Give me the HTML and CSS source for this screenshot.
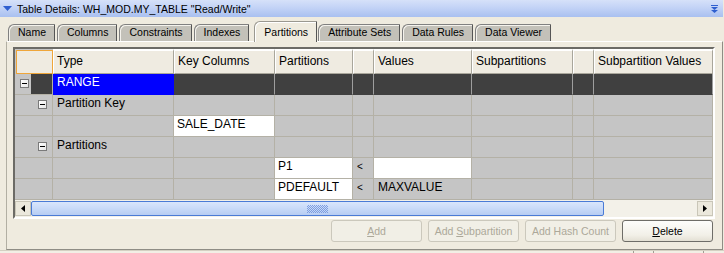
FILE: index.html
```html
<!DOCTYPE html>
<html>
<head>
<meta charset="utf-8">
<link rel="stylesheet" href="styles.css">
</head>
<body>
<div class="app">
  <div class="titlebar">
    <svg class="title-tri" width="9" height="6" viewBox="0 0 9 6"><path d="M0 0H9L4.5 5Z" fill="#2f5fd0"/></svg>
    <span class="title">Table Details: WH_MOD.MY_TABLE "Read/Write"</span>
    <svg class="title-collapse" width="7" height="8" viewBox="0 0 7 8"><path d="M0 0.5H7" stroke="#2f5fd0" stroke-width="1"/><path d="M0 2H7L3.5 5Z" fill="#2f5fd0"/><path d="M0 5H7L3.5 8Z" fill="#2f5fd0"/></svg>
  </div>
  <div class="tabs">
    <div class="tab">Name</div>
    <div class="tab">Columns</div>
    <div class="tab">Constraints</div>
    <div class="tab">Indexes</div>
    <div class="tab active">Partitions</div>
    <div class="tab">Attribute Sets</div>
    <div class="tab">Data Rules</div>
    <div class="tab">Data Viewer</div>
  </div>
  <div class="panel">
    <div class="scrollpane">
      <div class="grid">
        <div class="hcell corner"></div>
        <div class="hcell">Type</div>
        <div class="hcell">Key Columns</div>
        <div class="hcell">Partitions</div>
        <div class="hcell"></div>
        <div class="hcell">Values</div>
        <div class="hcell">Subpartitions</div>
        <div class="hcell"></div>
        <div class="hcell">Subpartition Values</div>

        <div class="cell tree sel-tree lvl0"><span class="toggle"></span></div>
        <div class="cell sel-blue">RANGE</div>
        <div class="cell sel"></div>
        <div class="cell sel"></div>
        <div class="cell sel"></div>
        <div class="cell sel"></div>
        <div class="cell sel"></div>
        <div class="cell sel"></div>
        <div class="cell sel"></div>

        <div class="cell tree lvl1"><span class="toggle"></span></div>
        <div class="cell">Partition Key</div>
        <div class="cell"></div>
        <div class="cell"></div>
        <div class="cell"></div>
        <div class="cell"></div>
        <div class="cell"></div>
        <div class="cell"></div>
        <div class="cell"></div>

        <div class="cell tree"></div>
        <div class="cell"></div>
        <div class="cell edit">SALE_DATE</div>
        <div class="cell"></div>
        <div class="cell"></div>
        <div class="cell"></div>
        <div class="cell"></div>
        <div class="cell"></div>
        <div class="cell"></div>

        <div class="cell tree lvl1"><span class="toggle"></span></div>
        <div class="cell">Partitions</div>
        <div class="cell"></div>
        <div class="cell"></div>
        <div class="cell"></div>
        <div class="cell"></div>
        <div class="cell"></div>
        <div class="cell"></div>
        <div class="cell"></div>

        <div class="cell tree"></div>
        <div class="cell"></div>
        <div class="cell"></div>
        <div class="cell edit">P1</div>
        <div class="cell op">&lt;</div>
        <div class="cell edit"></div>
        <div class="cell"></div>
        <div class="cell"></div>
        <div class="cell"></div>

        <div class="cell tree"></div>
        <div class="cell"></div>
        <div class="cell"></div>
        <div class="cell edit">PDEFAULT</div>
        <div class="cell op">&lt;</div>
        <div class="cell">MAXVALUE</div>
        <div class="cell"></div>
        <div class="cell"></div>
        <div class="cell"></div>
      </div>
      <div class="hscroll">
        <div class="arrow left"><svg width="4" height="7" viewBox="0 0 4 7"><path d="M4 0V7L0 3.5Z" fill="#000"/></svg></div>
        <div class="thumb"><span class="grip"></span></div>
        <div class="track"></div>
        <div class="arrow right"><svg width="4" height="7" viewBox="0 0 4 7"><path d="M0 0V7L4 3.5Z" fill="#000"/></svg></div>
      </div>
    </div>
    <div class="buttons">
      <button class="btn" disabled><u>A</u>dd</button>
      <button class="btn" disabled>Add <u>S</u>ubpartition</button>
      <button class="btn" disabled>Add Hash Count</button>
      <button class="btn primary"><u>D</u>elete</button>
    </div>
  </div>
  <div class="statusbar">
    <span class="sep s1"></span><span class="sep s2"></span><span class="sep s3"></span>
  </div>
</div>
</body>
</html>
```
FILE: styles.css
```css
* { box-sizing: border-box; }
html, body { margin: 0; padding: 0; }
body {
  background: #efebdf;
  font-family: "Liberation Sans", Arial, sans-serif;
  width: 724px;
  height: 253px;
  overflow: hidden;
  color: #000;
}
.app { width: 724px; height: 253px; display: flex; flex-direction: column; }

.titlebar {
  height: 17px;
  margin-right: 1px;
  display: flex;
  align-items: center;
  background: linear-gradient(#d6e1f9, #c3d3f6 45%, #a9c0f0);
  font-size: 10.5px;
}
.title-tri { margin: 1px 5px 0 3px; }
.title { flex: 1; }
.title-collapse { margin: 0 5px 0 0; }

.tabs {
  height: 24px;
  display: flex;
  align-items: flex-end;
  padding-left: 8px;
  gap: 2px;
  position: relative;
  z-index: 2;
}
.tab {
  height: 17px;
  padding: 0 8px 0 9px;
  font-size: 10.5px;
  line-height: 15px;
  background: #c3c1b9;
  border: 1px solid #808080;
  border-bottom: none;
  border-right-color: #555;
  border-top-left-radius: 6px;
  box-shadow: inset 1px 1px 0 #f4f2ec;
  white-space: nowrap;
}
.tab.active {
  padding: 3px 8px 0 9px;
  margin: 0 -1px -1px 3px;
  height: 21px;
  background: #efebdf;
  border-color: #9a9890;
  border-right-color: #555;
  box-shadow: inset 1px 1px 0 #fff;
}

.panel {
  margin-left: 6px;
  margin-right: 1px;
  height: 209px;
  border-top: 1px solid #fff;
  border-left: 1px solid #b2afa3;
  border-right: 1px solid #8f8d85;
  border-bottom: 1px solid #8f8d85;
  padding: 5px 7px 0 6px;
  display: flex;
  flex-direction: column;
}

.scrollpane {
  width: 702px;
  border-style: solid;
  border-width: 2px;
  border-color: #6c6b66 #fff #fff #6c6b66;
  display: flex;
  flex-direction: column;
}
.grid {
  display: grid;
  grid-template-columns: 38px 121px 101px 78px 21px 98px 101px 21px 119px;
  grid-template-rows: 25px repeat(6, 21px);
  background: #c5c5c5;
  font-size: 12px;
}
.hcell {
  background: #efebe1;
  border-top: 2px solid #fff;
  border-left: 1px solid #fff;
  border-right: 1px solid #a9a69b;
  border-bottom: 1px solid #a9a69b;
  padding: 2px 0 0 3px;
  line-height: 17px;
  white-space: nowrap;
  overflow: hidden;
}
.hcell.corner {
  border: 1px solid #efa63a;
  margin: 1px 0 0 1px;
}
.cell {
  border-right: 1px solid #b4b1a6;
  border-bottom: 1px solid #b4b1a6;
  padding: 0 0 0 4px;
  line-height: 17px;
  white-space: nowrap;
  overflow: hidden;
}
.cell.tree { display: flex; align-items: center; padding: 0 0 1px 0; }
.cell.tree.lvl0 { padding-left: 5px; }
.cell.tree.lvl1 { padding-left: 23px; }
.cell.sel-tree { background: linear-gradient(to right, #c5c5c5 16px, #404040 16px); }
.cell.sel { background: #404040; border-right-color: #9e9e9e; border-bottom-color: #404040; }
.cell.sel-blue { background: #0000ff; color: #fff; border-right-color: #0000ff; border-bottom-color: #0000ff; }
.cell.edit { background: #fff; padding-left: 3px; }
.cell.op { padding-left: 4px; font-size: 10px; }

.toggle {
  width: 9px;
  height: 9px;
  border: 1px solid #7a7a7a;
  background: linear-gradient(135deg, #fff, #e6e6e6);
  position: relative;
  display: block;
}
.toggle::after {
  content: "";
  position: absolute;
  left: 1px;
  top: 3px;
  width: 5px;
  height: 1px;
  background: #000;
}

.hscroll {
  height: 17px;
  display: flex;
  background: #f3f1e9;
  padding-top: 1px;
}
.arrow {
  width: 16px;
  height: 15px;
  background: #ebe8dc;
  border: 1px solid #c9c6b8;
  display: flex;
  align-items: center;
  justify-content: center;
}
.thumb {
  width: 573px;
  height: 15px;
  border: 1px solid #4a7bd6;
  border-radius: 2px;
  background: linear-gradient(#d9e6fc, #c8daf8 50%, #b7cdf3);
  display: flex;
  align-items: center;
  justify-content: center;
}
.grip {
  display: block;
  width: 21px;
  height: 8px;
  background-image: conic-gradient(#7d9de0 25%, transparent 0 50%, #7d9de0 0 75%, transparent 0);
  background-size: 2px 2px;
}
.track { flex: 1; }

.buttons {
  display: flex;
  justify-content: flex-end;
  gap: 6px;
  margin-top: 1px;
  margin-right: 2px;
}
.btn {
  width: 91px;
  height: 22px;
  padding: 0;
  font-family: "Liberation Sans", Arial, sans-serif;
  font-size: 10.5px;
  border-radius: 3px;
  background: #f1efe6;
  border: 1px solid #cbc8bc;
  color: #aca899;
  white-space: nowrap;
}
.btn.primary {
  color: #000;
  border-color: #6e6d68;
  background: linear-gradient(#fdfdfb, #f2f0e8 70%, #e3e0d4);
}

.statusbar {
  flex: 1;
  position: relative;
  border-top: 1px solid #d4d0c2;
  background: #f2efe5;
}
.sep { position: absolute; top: 0; width: 1px; height: 3px; background: #a09d92; }
.s1 { left: 633px; }
.s2 { left: 653px; }
.s3 { left: 703px; }
```
